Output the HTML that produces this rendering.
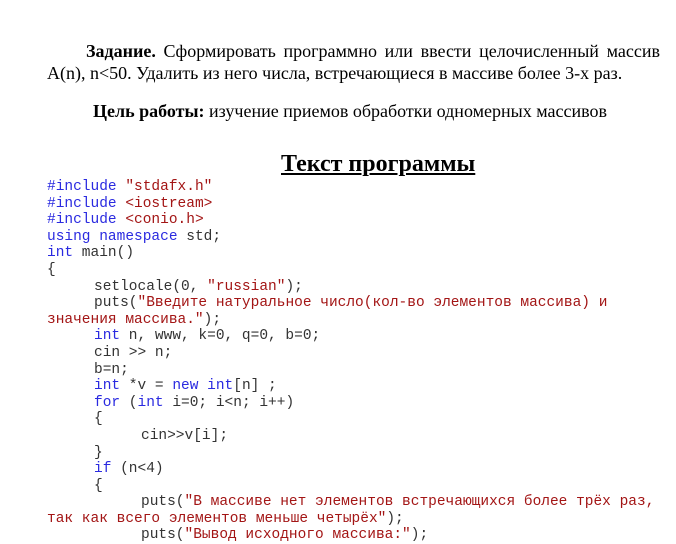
<!DOCTYPE html>
<html><head><meta charset="utf-8"><style>
body{margin:0;width:676px;height:544px;background:#fff;overflow:hidden;position:relative}
.t{position:absolute;font-family:"Liberation Serif",serif;font-size:18px;color:#000;white-space:nowrap}
pre{position:absolute;left:47px;top:179px;margin:0;font-family:"Liberation Mono",monospace;font-size:14.5px;line-height:16.6px;color:#333;tab-size:47px;-moz-tab-size:47px}
.k{color:#2a2ae0}.s{color:#a31515}
</style></head><body>
<div class="t" style="left:86px;top:41px;width:574px;text-align:justify;text-align-last:justify;white-space:normal"><b>Задание.</b> Сформировать программно или ввести целочисленный массив</div>
<div class="t" style="left:47px;top:63px">A(n), n&lt;50. Удалить из него числа, встречающиеся в массиве более 3-х раз.</div>
<div class="t" style="left:93px;top:101px"><b>Цель работы:</b> изучение приемов обработки одномерных массивов</div>
<div class="t" style="left:281px;top:151px;font-size:24px;font-weight:bold;text-decoration:underline">Текст программы</div>
<pre><span class="k">#include</span> <span class="s">"stdafx.h"</span>
<span class="k">#include</span> <span class="s">&lt;iostream&gt;</span>
<span class="k">#include</span> <span class="s">&lt;conio.h&gt;</span>
<span class="k">using</span> <span class="k">namespace</span> std;
<span class="k">int</span> main()
{
	setlocale(0, <span class="s">"russian"</span>);
	puts(<span class="s">"Введите натуральное число(кол-во элементов массива) и</span>
<span class="s">значения массива."</span>);
	<span class="k">int</span> n, www, k=0, q=0, b=0;
	cin &gt;&gt; n;
	b=n;
	<span class="k">int</span> *v = <span class="k">new</span> <span class="k">int</span>[n] ;
	<span class="k">for</span> (<span class="k">int</span> i=0; i&lt;n; i++)
	{
		cin&gt;&gt;v[i];
	}
	<span class="k">if</span> (n&lt;4)
	{
		puts(<span class="s">"В массиве нет элементов встречающихся более трёх раз,</span>
<span class="s">так как всего элементов меньше четырёх"</span>);
		puts(<span class="s">"Вывод исходного массива:"</span>);
</pre>
</body></html>
